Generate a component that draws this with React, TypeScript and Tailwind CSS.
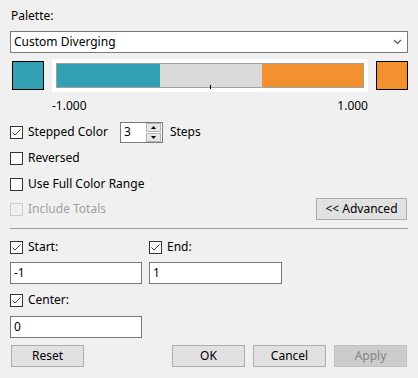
import React from 'react'

const font = { fontFamily: '"Noto Sans", "Open Sans", sans-serif' }

function CheckBox({ checked, disabled }: { checked?: boolean; disabled?: boolean }) {
  return (
    <div
      className={`w-[13px] h-[13px] border flex items-center justify-center shrink-0 ${
        disabled ? 'border-[#cccccc] bg-[#f0f0f0]' : 'border-[#333333] bg-white'
      }`}
    >
      {checked && (
        <svg width="11" height="11" viewBox="0 0 11 11">
          <path d="M1.5 5.5 L4 8 L9.5 2.5" fill="none" stroke="#404040" strokeWidth="1" />
        </svg>
      )}
    </div>
  )
}

function CheckRow({ label, checked, disabled }: { label: string; checked?: boolean; disabled?: boolean }) {
  return (
    <div className="flex items-center gap-[5px]">
      <CheckBox checked={checked} disabled={disabled} />
      <span className={disabled ? 'text-[#a0a0a0]' : 'text-black'}>{label}</span>
    </div>
  )
}

function Btn({ label, disabled }: { label: string; disabled?: boolean }) {
  return (
    <div
      className={`w-[73px] h-[22px] border flex items-center justify-center ${
        disabled ? 'bg-[#cccccc] border-[#bfbfbf] text-[#838383]' : 'bg-[#e1e1e1] border-[#adadad] text-black'
      }`}
    >
      {label}
    </div>
  )
}

export default function App() {
  return (
    <div className="w-[418px] h-[378px] bg-[#f0f0f0] text-[12px] leading-[16px] text-black px-[10px] pt-[8px] flex flex-col" style={font}>
      <div className="h-[16px] pl-[1px]">Palette:</div>

      {/* palette dropdown */}
      <div className="mt-[7px] h-[22px] border border-[#7a7a7a] bg-white flex items-center justify-between pl-[3px] pr-[5px]">
        <span>Custom Diverging</span>
        <svg width="9" height="6" viewBox="0 0 9 6">
          <path d="M1 1 L4.5 4.5 L8 1" fill="none" stroke="#555" strokeWidth="1.2" />
        </svg>
      </div>

      {/* color ramp */}
      <div className="mt-[6px] h-[33px] flex items-center">
        <div className="ml-[2px] w-[32px] h-[29px] border border-black bg-[#33a1b4]" />
        <div className="ml-[8px] w-[316px] h-[33px] bg-white p-[4px]">
          <div className="relative h-full border border-[#a0a0a0] flex">
            <div className="w-[103px] bg-[#33a1b4]" />
            <div className="w-[102px] bg-[#d9d9d9]" />
            <div className="flex-1 bg-[#f39130]" />
            <div className="absolute left-[153px] bottom-[-2px] w-[1px] h-[4px] bg-black" />
          </div>
        </div>
        <div className="ml-[8px] w-[32px] h-[29px] border border-black bg-[#f39130]" />
      </div>

      <div className="mt-[6px] h-[16px] w-[358px] pl-[42px] flex justify-between">
        <span>-1.000</span>
        <span>1.000</span>
      </div>

      {/* options */}
      <div className="mt-[7px] h-[22px] flex items-center">
        <CheckRow label="Stepped Color" checked />
        <div className="ml-[12px] w-[43px] h-[21px] border border-[#7a7a7a] bg-white flex items-center justify-between pl-[3px] pr-[1px]">
          <span>3</span>
          <div className="flex flex-col gap-[1px]">
            <div className="w-[15px] h-[9px] bg-[#e6e6e6] border border-[#b5b5b5] flex items-center justify-center">
              <svg width="5" height="3" viewBox="0 0 5 3"><path d="M0 3 L2.5 0 L5 3 Z" fill="#000" /></svg>
            </div>
            <div className="w-[15px] h-[9px] bg-[#e6e6e6] border border-[#b5b5b5] flex items-center justify-center">
              <svg width="5" height="3" viewBox="0 0 5 3"><path d="M0 0 L2.5 3 L5 0 Z" fill="#000" /></svg>
            </div>
          </div>
        </div>
        <span className="ml-[7px]">Steps</span>
      </div>
      <div className="mt-[4px] h-[22px] flex items-center">
        <CheckRow label="Reversed" />
      </div>
      <div className="mt-[4px] h-[22px] flex items-center">
        <CheckRow label="Use Full Color Range" />
      </div>
      <div className="mt-[3px] h-[22px] flex items-center justify-between">
        <CheckRow label="Include Totals" disabled />
        <div className="mr-[1px] w-[91px] h-[22px] border border-[#adadad] bg-[#e1e1e1] flex items-center justify-center">
          &lt;&lt; Advanced
        </div>
      </div>

      <div className="mt-[8px] h-[1px] bg-[#a0a0a0]" />

      {/* range */}
      <div className="mt-[9px] grid grid-cols-[139px_133px] gap-y-[6px]">
        <div className="h-[18px] flex items-center">
          <CheckRow label="Start:" checked />
        </div>
        <div className="h-[18px] flex items-center">
          <CheckRow label="End:" checked />
        </div>
        <div className="w-[132px] h-[22px] border border-[#7a7a7a] bg-white pl-[3px] flex items-center">-1</div>
        <div className="w-[133px] h-[22px] border border-[#7a7a7a] bg-white pl-[3px] flex items-center">1</div>
      </div>
      <div className="mt-[7px] h-[18px] flex items-center">
        <CheckRow label="Center:" checked />
      </div>
      <div className="mt-[7px] w-[132px] h-[22px] border border-[#7a7a7a] bg-white pl-[3px] flex items-center">0</div>

      <div className="mt-[7px] flex items-center justify-between px-[1px]">
        <Btn label="Reset" />
        <div className="flex gap-[8px]">
          <Btn label="OK" />
          <Btn label="Cancel" />
          <Btn label="Apply" disabled />
        </div>
      </div>
    </div>
  )
}
